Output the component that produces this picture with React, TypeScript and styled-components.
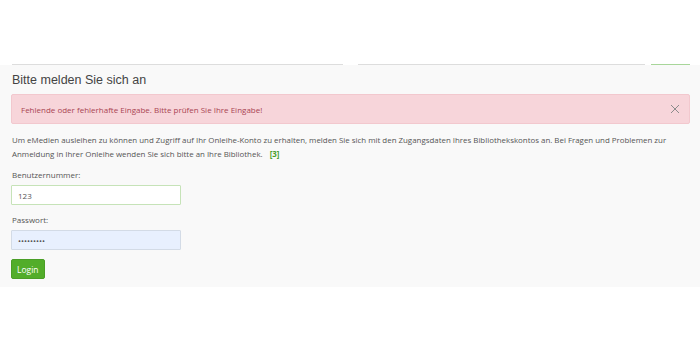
import styled, { createGlobalStyle } from 'styled-components';

const GlobalStyle = createGlobalStyle`
  html, body {
    margin: 0;
    padding: 0;
    background: #ffffff;
  }
  body {
    font-family: "Open Sans", "Liberation Sans", sans-serif;
  }
  * {
    box-sizing: border-box;
  }
`;

const TopBar = styled.div`
  height: 65px;
  display: flex;
  align-items: flex-end;
  padding: 0 10px 0 12px;
  background: #ffffff;
`;

interface FieldEdgeProps {
  width: number;
  edge: string;
  gap: number;
}

const FieldEdge = styled.div<FieldEdgeProps>`
  width: ${({ width }) => width}px;
  margin-right: ${({ gap }) => gap}px;
  height: 20px;
  border-bottom: 1px solid ${({ edge }) => edge};
`;

const Panel = styled.section`
  background: #f9f9f9;
  padding: 6px 10px 8px 11px;
`;

const Title = styled.h2`
  margin: 0 0 5px 1px;
  font-family: "Liberation Sans", Arial, sans-serif;
  font-weight: normal;
  font-size: 12.5px;
  line-height: 18px;
  color: #444444;
`;

const Alert = styled.div`
  display: flex;
  align-items: center;
  justify-content: space-between;
  height: 30px;
  padding: 0 8px 0 9px;
  background: #f7d5da;
  border: 1px solid #f2c8ce;
  border-radius: 2px;
  color: #a94452;
  font-size: 8px;
`;

const Close = styled.button`
  border: 0;
  background: none;
  padding: 0;
  width: 12px;
  height: 12px;
  display: flex;
  align-items: center;
  justify-content: center;
  cursor: pointer;
`;

const Intro = styled.p`
  margin: 9px 0 8px 1px;
  font-size: 7.9px;
  line-height: 14px;
  color: #555555;
`;

const Ref = styled.a`
  margin-left: 5px;
  color: #4aa02c;
  font-weight: bold;
  text-decoration: none;
`;

const Form = styled.form`
  display: flex;
  flex-direction: column;
  align-items: flex-start;
`;

const Label = styled.label`
  margin: 0 0 4px 1px;
  font-size: 8px;
  line-height: 12px;
  color: #555555;
`;

interface InputProps {
  autofilled?: boolean;
}

const Input = styled.input<InputProps>`
  width: 170px;
  height: 20px;
  margin: 0 0 9px 0;
  padding: 0 6px;
  font-family: "Open Sans", "Liberation Sans", sans-serif;
  font-size: 8px;
  color: #555555;
  background: ${({ autofilled }) => (autofilled ? '#e8f0fe' : '#ffffff')};
  border: 1px solid ${({ autofilled }) => (autofilled ? '#d3dbe6' : '#c6e3b8')};
  border-radius: 1px;
  outline: none;
`;

const Button = styled.button`
  height: 20px;
  padding: 0 5px;
  font-family: "Open Sans", "Liberation Sans", sans-serif;
  font-size: 8.5px;
  color: #ffffff;
  background: #52ad2a;
  border: 1px solid #4a9e26;
  border-radius: 2px;
`;

export default function App() {
  return (
    <>
      <GlobalStyle />
      <TopBar>
        <FieldEdge width={331} gap={15} edge="#dddddd" />
        <FieldEdge width={287} gap={6} edge="#dddddd" />
        <FieldEdge width={39} gap={0} edge="#a8d69a" />
      </TopBar>
      <Panel>
        <Title>Bitte melden Sie sich an</Title>
        <Alert>
          <span>Fehlende oder fehlerhafte Eingabe. Bitte prüfen Sie Ihre Eingabe!</span>
          <Close aria-label="Schließen">
            <svg width="10" height="10" viewBox="0 0 10 10">
              <path d="M1 1 L9 9 M9 1 L1 9" stroke="#8c8c8c" strokeWidth="1" />
            </svg>
          </Close>
        </Alert>
        <Intro>
          Um eMedien ausleihen zu können und Zugriff auf Ihr Onleihe-Konto zu erhalten, melden Sie sich
          mit den Zugangsdaten Ihres Bibliothekskontos an. Bei Fragen und Problemen zur Anmeldung in
          Ihrer Onleihe wenden Sie sich bitte an Ihre Bibliothek.{' '}
          <Ref href="#">[3]</Ref>
        </Intro>
        <Form>
          <Label>Benutzernummer:</Label>
          <Input defaultValue="123" />
          <Label>Passwort:</Label>
          <Input type="password" defaultValue="123456789" autofilled />
          <Button type="button">Login</Button>
        </Form>
      </Panel>
    </>
  );
}
